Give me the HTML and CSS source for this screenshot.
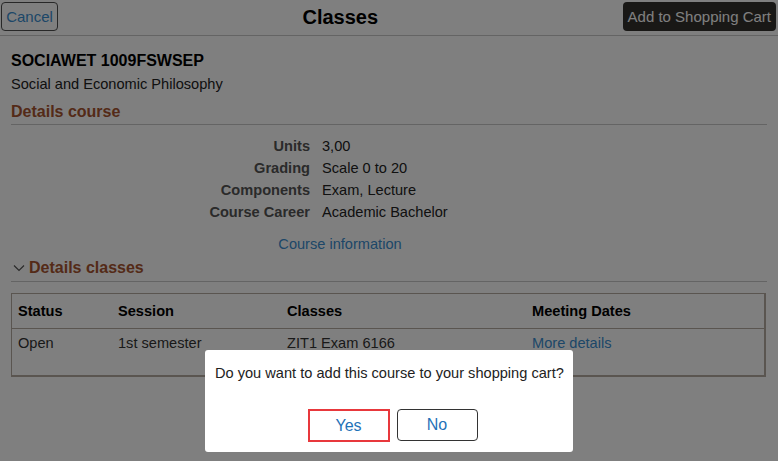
FILE: index.html
```html
<!DOCTYPE html>
<html lang="en">
<head>
  <meta charset="UTF-8">
  <meta name="viewport" content="width=device-width, initial-scale=1.0">
  <title>Classes</title>
  <link rel="stylesheet" href="styles.css">
</head>
<body>
  <!-- Barra superior -->
  <header class="topbar">
    <button class="btn-cancel">Cancel</button>
    <h1 class="page-title">Classes</h1>
    <button class="btn-cart">Add to Shopping Cart</button>
  </header>

  <main class="content">
    <div class="course-code">SOCIAWET 1009FSWSEP</div>
    <div class="course-name">Social and Economic Philosophy</div>

    <h2 class="section-title">Details course</h2>
    <div class="details">
      <span class="label">Units</span><span class="value">3,00</span>
      <span class="label">Grading</span><span class="value">Scale 0 to 20</span>
      <span class="label">Components</span><span class="value">Exam, Lecture</span>
      <span class="label">Course Career</span><span class="value">Academic Bachelor</span>
    </div>
    <div class="info-link"><a href="#">Course information</a></div>

    <h2 class="section-title collapsible">
      <svg class="chevron" width="12" height="8" viewBox="0 0 12 8"><path d="M1 1.5 L6 6.5 L11 1.5" fill="none" stroke="#555" stroke-width="1.2"/></svg>
      Details classes
    </h2>

    <div class="classes-table">
      <div class="row head">
        <span>Status</span><span>Session</span><span>Classes</span><span>Meeting Dates</span>
      </div>
      <div class="row">
        <span>Open</span><span>1st semester</span><span>ZIT1 Exam 6166</span><span><a href="#">More details</a></span>
      </div>
    </div>
  </main>

  <!-- Ventana de confirmacion -->
  <div class="overlay"></div>
  <div class="dialog">
    <p class="dialog-text">Do you want to add this course to your shopping cart?</p>
    <div class="dialog-buttons">
      <button class="btn-dialog btn-yes">Yes</button>
      <button class="btn-dialog">No</button>
    </div>
  </div>
</body>
</html>
```
FILE: styles.css
```css
body {
    font-family: 'Liberation Sans', Arial, sans-serif;
    color: #333;
    background: #fff;
    margin: 0;
    padding: 0;
    font-size: 14.6px;
}

a {
    color: #3a8ed0;
    text-decoration: none;
}

button {
    font-family: inherit;
    cursor: pointer;
}

.topbar {
    border-bottom: 1px solid #c8c8c8;
    display: flex;
    align-items: flex-start;
    justify-content: space-between;
    padding: 2px 2px 0 1px;
    height: 33px;
}

.btn-cancel {
    height: 29px;
    width: 57px;
    padding: 0;
    background: #fff;
    border: 1px solid #505050;
    border-radius: 4px;
    color: #3a8ed0;
    font-size: 15px;
}

.page-title {
    margin: 0;
    font-size: 20px;
    line-height: 30px;
    color: #000;
}

.btn-cart {
    height: 29px;
    padding: 0 5px;
    background: #32302c;
    color: #fff;
    border: none;
    border-radius: 4px;
    font-size: 15px;
}

.content {
    padding: 15px 11px 0 11px;
}

.course-code {
    font-size: 16px;
    font-weight: bold;
    line-height: 20px;
    color: #000;
}

.course-name {
    margin-top: 4px;
    line-height: 18px;
    color: #222;
}

.section-title {
    margin: 9px 0 0 0;
    font-size: 16px;
    line-height: 20px;
    color: #a85530;
    padding-bottom: 2px;
    border-bottom: 1px solid #c8c8c8;
}

.collapsible {
    margin-top: 4px;
    padding-bottom: 3px;
    display: flex;
    align-items: center;
    gap: 4px;
}

.chevron {
    margin-left: 2px;
}

.details {
    display: grid;
    grid-template-columns: 299px auto;
    column-gap: 12px;
    margin-top: 10px;
    line-height: 22px;
}

.details .label {
    text-align: right;
    font-weight: bold;
    color: #555;
}

.details .value {
    color: #222;
}

.info-link {
    text-align: center;
    line-height: 20px;
    margin-top: 11px;
    padding-right: 98px;
}

.classes-table {
    margin: 11px 1px 0 0;
    border: 1px solid #b4aaa0;
    border-right-width: 2px;
    border-bottom-width: 2px;
}

.classes-table .row {
    display: grid;
    grid-template-columns: 100px 169px 245px 1fr;
    height: 46px;
    line-height: 18px;
}

.classes-table .row span {
    padding: 5px 6px 0 6px;
}

.classes-table .head {
    height: 34px;
    border-bottom: 1px solid #b4aaa0;
    font-weight: bold;
    color: #000;
    align-items: center;
}

.classes-table .head span {
    padding-top: 0;
}

.overlay {
    position: fixed;
    inset: 0;
    background: rgba(0, 0, 0, 0.5);
}

.dialog {
    position: fixed;
    left: 205px;
    top: 350px;
    width: 368px;
    height: 102px;
    background: #fff;
    border-radius: 3px;
    box-sizing: border-box;
    padding: 14px 0 0 10px;
}

.dialog-text {
    margin: 0;
    line-height: 18px;
    color: #222;
    white-space: nowrap;
}

.dialog-buttons {
    display: flex;
    justify-content: center;
    gap: 7px;
    margin-top: 27px;
    padding-right: 3px;
}

.btn-dialog {
    width: 81px;
    height: 32px;
    background: #fff;
    border: 1px solid #333;
    border-radius: 4px;
    color: #1f72b8;
    font-size: 16px;
    padding: 0;
}

.btn-yes {
    width: 82px;
    height: 33px;
    border: 2px solid #e8383c;
    border-radius: 0;
}
```
